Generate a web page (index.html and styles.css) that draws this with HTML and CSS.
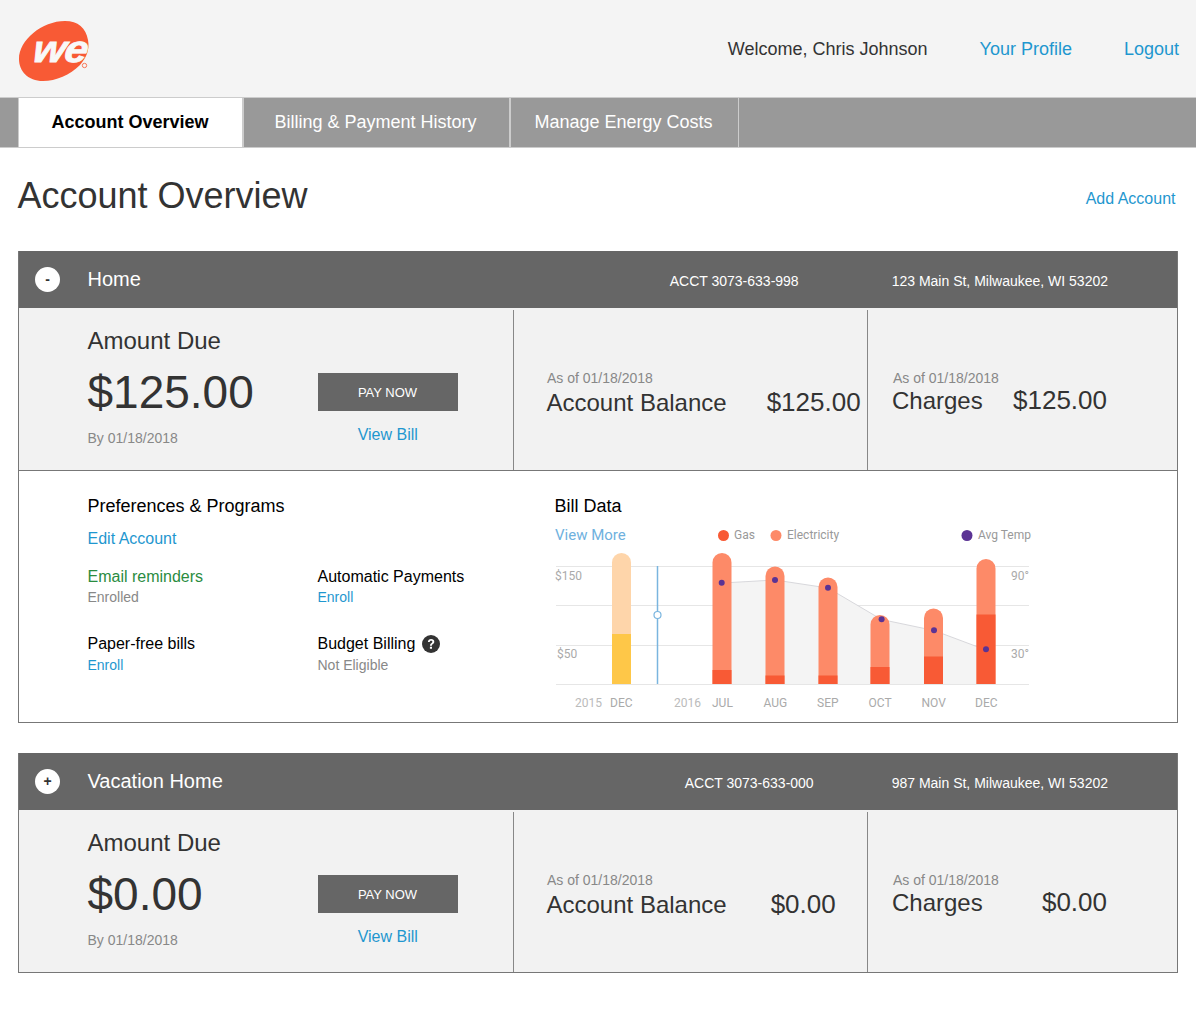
FILE: index.html
```html
<!DOCTYPE html>
<html lang="en">
<head>
<meta charset="utf-8">
<title>Account Overview</title>
<link rel="stylesheet" href="styles.css">
</head>
<body>
<header class="topbar">
  <svg class="logo" viewBox="0 0 72 62" width="72" height="62" aria-label="We logo">
    <path d="M70 19C72 29 68 37 62 44C52 54 38 60 25 60C10 60 1 50 1 38C1 19 24 0 47 0C60 0 68 7 70 19Z" fill="#f85a35"/>
    <text class="logo-word" transform="translate(13.500 41) skewX(-10) scale(1.100 1)">we</text>
    <circle cx="66.500" cy="44.500" r="2.200" fill="none" stroke="#f85a35" stroke-width=".8"/>
  </svg>
  <nav class="usernav">
    <span class="welcome">Welcome, Chris Johnson</span>
    <a href="#">Your Profile</a>
    <a href="#">Logout</a>
  </nav>
</header>
<nav class="tabs">
  <a class="tab tab-active" href="#">Account Overview</a>
  <a class="tab tab-billing" href="#">Billing &amp; Payment History</a>
  <a class="tab tab-energy" href="#">Manage Energy Costs</a>
</nav>
<main class="page">
  <div class="page-head">
    <h1>Account Overview</h1>
    <a href="#">Add Account</a>
  </div>

  <section class="card">
    <div class="card-head">
      <span class="toggle">-</span>
      <h2>Home</h2>
      <span class="acct acct-home">ACCT 3073-633-998</span>
      <span class="addr">123 Main St, Milwaukee, WI 53202</span>
    </div>
    <div class="summary">
      <div class="due">
        <div class="due-text">
          <div class="due-label">Amount Due</div>
          <div class="due-amount">$125.00</div>
          <div class="asof">By 01/18/2018</div>
        </div>
        <div class="due-actions">
          <a class="pay" href="#">PAY NOW</a>
          <a class="view" href="#">View Bill</a>
        </div>
      </div>
      <div class="metric metric-balance">
        <div class="asof">As of 01/18/2018</div>
        <div class="metric-row"><span class="metric-name">Account Balance</span><span class="metric-value">$125.00</span></div>
      </div>
      <div class="metric metric-charges">
        <div class="asof">As of 01/18/2018</div>
        <div class="metric-row"><span class="metric-name">Charges</span><span class="metric-value">$125.00</span></div>
      </div>
    </div>
    <div class="details">
      <div class="prefs">
        <h3>Preferences &amp; Programs</h3>
        <a class="edit" href="#">Edit Account</a>
        <div class="prefs-grid">
          <div><div class="pref-name pref-on">Email reminders</div><div class="pref-sub">Enrolled</div></div>
          <div><div class="pref-name">Automatic Payments</div><a class="pref-link" href="#">Enroll</a></div>
          <div><div class="pref-name">Paper-free bills</div><a class="pref-link" href="#">Enroll</a></div>
          <div>
            <div class="pref-name pref-help">Budget Billing
              <svg class="help" viewBox="0 0 18 18" width="18" height="18" aria-hidden="true"><circle cx="9" cy="9" r="9" fill="#333"/><path d="M5.900 7C6 5.100 7.300 4 9.100 4C11 4 12.300 5.100 12.300 6.700C12.300 8 11.500 8.600 10.700 9.200C10.100 9.600 9.900 9.900 9.900 10.700H8C8 9.400 8.400 8.800 9.300 8.200C10 7.700 10.400 7.400 10.400 6.800C10.400 6.100 9.900 5.700 9.100 5.700C8.300 5.700 7.800 6.200 7.700 7ZM7.900 11.700H10V13.700H7.900Z" fill="#fff"/></svg>
            </div>
            <div class="pref-sub">Not Eligible</div>
          </div>
        </div>
      </div>
      <div class="bill">
        <h3>Bill Data</h3>
        <svg class="chart" viewBox="540 520 500 200" width="500" height="200">
          <text class="c-more" x="555" y="540">View More</text>
          <circle cx="723.500" cy="535.500" r="5.500" fill="#f85a35"/><text class="c-leg" x="734" y="539">Gas</text>
          <circle cx="776" cy="535.500" r="5.500" fill="#fd8a68"/><text class="c-leg" x="787" y="539">Electricity</text>
          <circle cx="967" cy="535.500" r="5.500" fill="#5b3394"/><text class="c-leg" x="978" y="539">Avg Temp</text>

          <path class="c-grid" d="M556 566.500H1029M556 605.500H1029M556 645.500H1029M556 684.500H1029"/>
          <path d="M722 583L775 580L828 588L881.500 619.500L934 630.500L986 650V684H722Z" fill="#f4f4f4"/>
          <path d="M722 583L775 580L828 588L881.500 619.500L934 630.500L986 650" fill="none" stroke="#d8d8dc"/>

          <path d="M612 684V562.500a9.500 9.500 0 0 1 19 0V684Z" fill="#fed5aa"/>
          <rect x="612" y="634" width="19" height="50" fill="#fec748"/>
          <path d="M657.500 566V684" stroke="#7ab5df" stroke-width="1.500"/>
          <circle cx="657.500" cy="615" r="3.500" fill="#fff" stroke="#7ab5df" stroke-width="1.200"/>

          <path d="M712.500 684V562.500a9.500 9.500 0 0 1 19 0V684Z" fill="#fd8a68"/>
          <rect x="712.500" y="670" width="19" height="14" fill="#f85a35"/>
          <path d="M765.500 684V576a9.500 9.500 0 0 1 19 0V684Z" fill="#fd8a68"/>
          <rect x="765.500" y="675.500" width="19" height="8.500" fill="#f85a35"/>
          <path d="M818.500 684V587a9.500 9.500 0 0 1 19 0V684Z" fill="#fd8a68"/>
          <rect x="818.500" y="675.500" width="19" height="8.500" fill="#f85a35"/>
          <path d="M870.500 684V624.500a9.500 9.500 0 0 1 19 0V684Z" fill="#fd8a68"/>
          <rect x="870.500" y="667" width="19" height="17" fill="#f85a35"/>
          <path d="M924 684V618a9.500 9.500 0 0 1 19 0V684Z" fill="#fd8a68"/>
          <rect x="924" y="656.500" width="19" height="27.500" fill="#f85a35"/>
          <path d="M976.500 684V568.500a9.500 9.500 0 0 1 19 0V684Z" fill="#fd8a68"/>
          <rect x="976.500" y="614.500" width="19" height="69.500" fill="#f85a35"/>

          <g fill="#5b3394">
            <circle cx="721.700" cy="582.700" r="3"/>
            <circle cx="775" cy="580" r="3"/>
            <circle cx="828" cy="587.700" r="3"/>
            <circle cx="881.600" cy="619.300" r="3"/>
            <circle cx="934" cy="630.300" r="3"/>
            <circle cx="986" cy="649.300" r="3"/>
          </g>

          <text class="c-ax" x="555" y="580">$150</text>
          <text class="c-ax" x="557" y="658">$50</text>
          <text class="c-ax" x="1011" y="580">90°</text>
          <text class="c-ax" x="1011" y="658">30°</text>
          <text class="c-yr" x="575" y="707">2015</text>
          <text class="c-mo" x="610" y="707">DEC</text>
          <text class="c-yr" x="674" y="707">2016</text>
          <text class="c-mo" x="712" y="707">JUL</text>
          <text class="c-mo" x="763.500" y="707">AUG</text>
          <text class="c-mo" x="817" y="707">SEP</text>
          <text class="c-mo" x="868.500" y="707">OCT</text>
          <text class="c-mo" x="921.500" y="707">NOV</text>
          <text class="c-mo" x="975" y="707">DEC</text>
        </svg>
      </div>
    </div>
  </section>

  <section class="card card-second">
    <div class="card-head">
      <span class="toggle">+</span>
      <h2>Vacation Home</h2>
      <span class="acct acct-vacation">ACCT 3073-633-000</span>
      <span class="addr">987 Main St, Milwaukee, WI 53202</span>
    </div>
    <div class="summary">
      <div class="due">
        <div class="due-text">
          <div class="due-label">Amount Due</div>
          <div class="due-amount">$0.00</div>
          <div class="asof">By 01/18/2018</div>
        </div>
        <div class="due-actions">
          <a class="pay" href="#">PAY NOW</a>
          <a class="view" href="#">View Bill</a>
        </div>
      </div>
      <div class="metric metric-balance">
        <div class="asof">As of 01/18/2018</div>
        <div class="metric-row"><span class="metric-name">Account Balance</span><span class="metric-value metric-value-zero">$0.00</span></div>
      </div>
      <div class="metric metric-charges">
        <div class="asof">As of 01/18/2018</div>
        <div class="metric-row"><span class="metric-name">Charges</span><span class="metric-value">$0.00</span></div>
      </div>
    </div>
  </section>
</main>
</body>
</html>
```

FILE: styles.css
```css
* { box-sizing: border-box; }
html, body { margin: 0; }
body {
  font-family: "Liberation Sans", Arial, sans-serif;
  color: #333;
  background: #fff;
}
a { color: #1f97cf; text-decoration: none; }
h1, h2, h3 { margin: 0; font-weight: 400; }

.topbar {
  height: 98px;
  display: flex;
  align-items: flex-start;
  justify-content: space-between;
  padding: 21px 17px 0 18px;
  background: #f4f4f4;
  border-bottom: 1px solid #ccc;
}
.logo { display: block; }
.logo-word {
  font-family: "Liberation Sans", Arial, sans-serif;
  font-size: 38px;
  font-weight: 700;
  font-style: italic;
  letter-spacing: -1px;
  fill: #f8f8f8;
  stroke: #f8f8f8;
  stroke-width: .8px;
}
.usernav {
  display: flex;
  gap: 52px;
  margin-top: 18px;
  font-size: 18px;
  line-height: 21px;
}
.welcome { color: #333; }

.tabs {
  height: 50px;
  display: flex;
  padding-left: 18px;
  background: #999;
  border-bottom: 1px solid #ccc;
}
.tab {
  height: 49px;
  display: flex;
  align-items: center;
  justify-content: center;
  padding-right: 2px;
  color: #fff;
  font-size: 18px;
  border-right: 2px solid #ccc;
}
.tab-active {
  width: 226px;
  padding-right: 1px;
  color: #000;
  font-weight: 700;
  background: #fff;
  border-left: 1px solid #ccc;
}
.tab-billing { width: 267px; }
.tab-energy { width: 228px; border-right-width: 1px; }

.page { padding: 0 18px; }
.page-head {
  height: 103px;
  display: flex;
  align-items: flex-start;
  justify-content: space-between;
  padding: 27px 2.500px 0 0;
}
.page-head h1 { font-size: 36px; line-height: 41px; margin-left: -.5px; }
.page-head a { margin-top: 15px; font-size: 16px; line-height: 18px; }

.card { border: 1px solid #777; border-top: 0; }
.card-second { margin-top: 30px; }
.card-head {
  height: 57px;
  display: flex;
  align-items: center;
  padding: 0 69px 0 16px;
  background: #666;
  color: #fff;
}
.toggle {
  width: 25px;
  height: 25px;
  margin: -1px 27.500px 0 0;
  display: flex;
  align-items: center;
  justify-content: center;
  border-radius: 50%;
  background: #fff;
  color: #333;
  font-size: 14px;
  font-weight: 700;
}
.card-head h2 { flex: 1; font-size: 20px; line-height: 23px; }
.acct, .addr { font-size: 14px; line-height: 16px; margin-top: 2px; }
.acct-home { margin-right: 93px; }
.acct-vacation { margin-right: 78px; }

.summary {
  height: 162px;
  display: grid;
  grid-template-columns: 494px 354px 1fr;
  background: #f2f2f2;
}
.due {
  display: flex;
  padding: 19px 0 0 68.500px;
}
.due-text { width: 230.500px; }
.due-label { font-size: 24px; line-height: 28px; color: #333; }
.due-amount { margin-top: 10px; margin-bottom: -1px; font-size: 46px; line-height: 55px; color: #333; }
.asof { font-size: 14px; line-height: 16px; color: #888; }
.due-text .asof { margin-top: 11px; }
.due-actions { width: 140px; padding-top: 46px; text-align: center; }
.pay {
  height: 38px;
  display: flex;
  align-items: center;
  justify-content: center;
  padding-right: 1px;
  background: #666;
  color: #fff;
  font-size: 13px;
}
.view { display: block; margin-top: 15px; padding-right: .5px; font-size: 16px; line-height: 18px; }

.metric { border-left: 1px solid #888; margin-top: 2px; padding: 60px 0 0 33px; }
.metric-row { display: flex; align-items: center; font-size: 24px; line-height: 28px; color: #333; }
.metric-value { font-size: 26px; margin-top: -2px; }
.metric-balance .metric-row { margin-top: 3px; margin-left: -.5px; }
.metric-balance .metric-value { margin-left: 40px; }
.metric-balance .metric-value-zero { margin-left: 44px; }
.metric-charges { padding-left: 25px; }
.metric-charges .metric-row { justify-content: space-between; width: 215px; margin-top: 1px; margin-left: -1px; }

.details {
  height: 252px;
  display: flex;
  border-top: 1px solid #777;
  background: #fff;
}
.prefs { width: 536px; padding: 25px 0 0 68.500px; }
.bill { flex: 1; padding: 25px 0 0 0; position: relative; }
.details h3 { font-size: 18px; line-height: 21px; color: #000; }
.bill h3 { margin-left: -.5px; }
.edit { display: block; margin-top: 13px; font-size: 16px; line-height: 18px; }
.prefs-grid {
  display: grid;
  grid-template-columns: 230px 1fr;
  grid-auto-rows: 67px;
  margin-top: 20px;
}
.pref-name { font-size: 16px; line-height: 18px; color: #000; height: 21px; }
.pref-on { color: #2a8c3f; }
.pref-sub { font-size: 14px; line-height: 16px; color: #888; }
.pref-link { display: block; font-size: 14px; line-height: 16px; }
.prefs-grid > :nth-child(n+3) .pref-sub,
.prefs-grid > :nth-child(n+3) .pref-link { margin-top: 1px; }
.pref-help { display: flex; align-items: flex-start; gap: 7px; }
.help { flex: none; }
.chart { position: absolute; left: -15px; top: 49px; display: block; }

.c-more { font-family: Roboto, sans-serif; font-size: 15px; fill: #6fb1de; }
.c-leg { font-family: Roboto, sans-serif; font-size: 12px; fill: #999; }
.c-ax { font-family: Roboto, sans-serif; font-size: 12px; fill: #aaa; }
.c-yr { font-family: Roboto, sans-serif; font-size: 12px; fill: #bbb; }
.c-mo { font-family: Roboto, sans-serif; font-size: 12px; fill: #aaa; }
.c-grid { fill: none; stroke: #e6e6e6; stroke-width: 1; }
```
